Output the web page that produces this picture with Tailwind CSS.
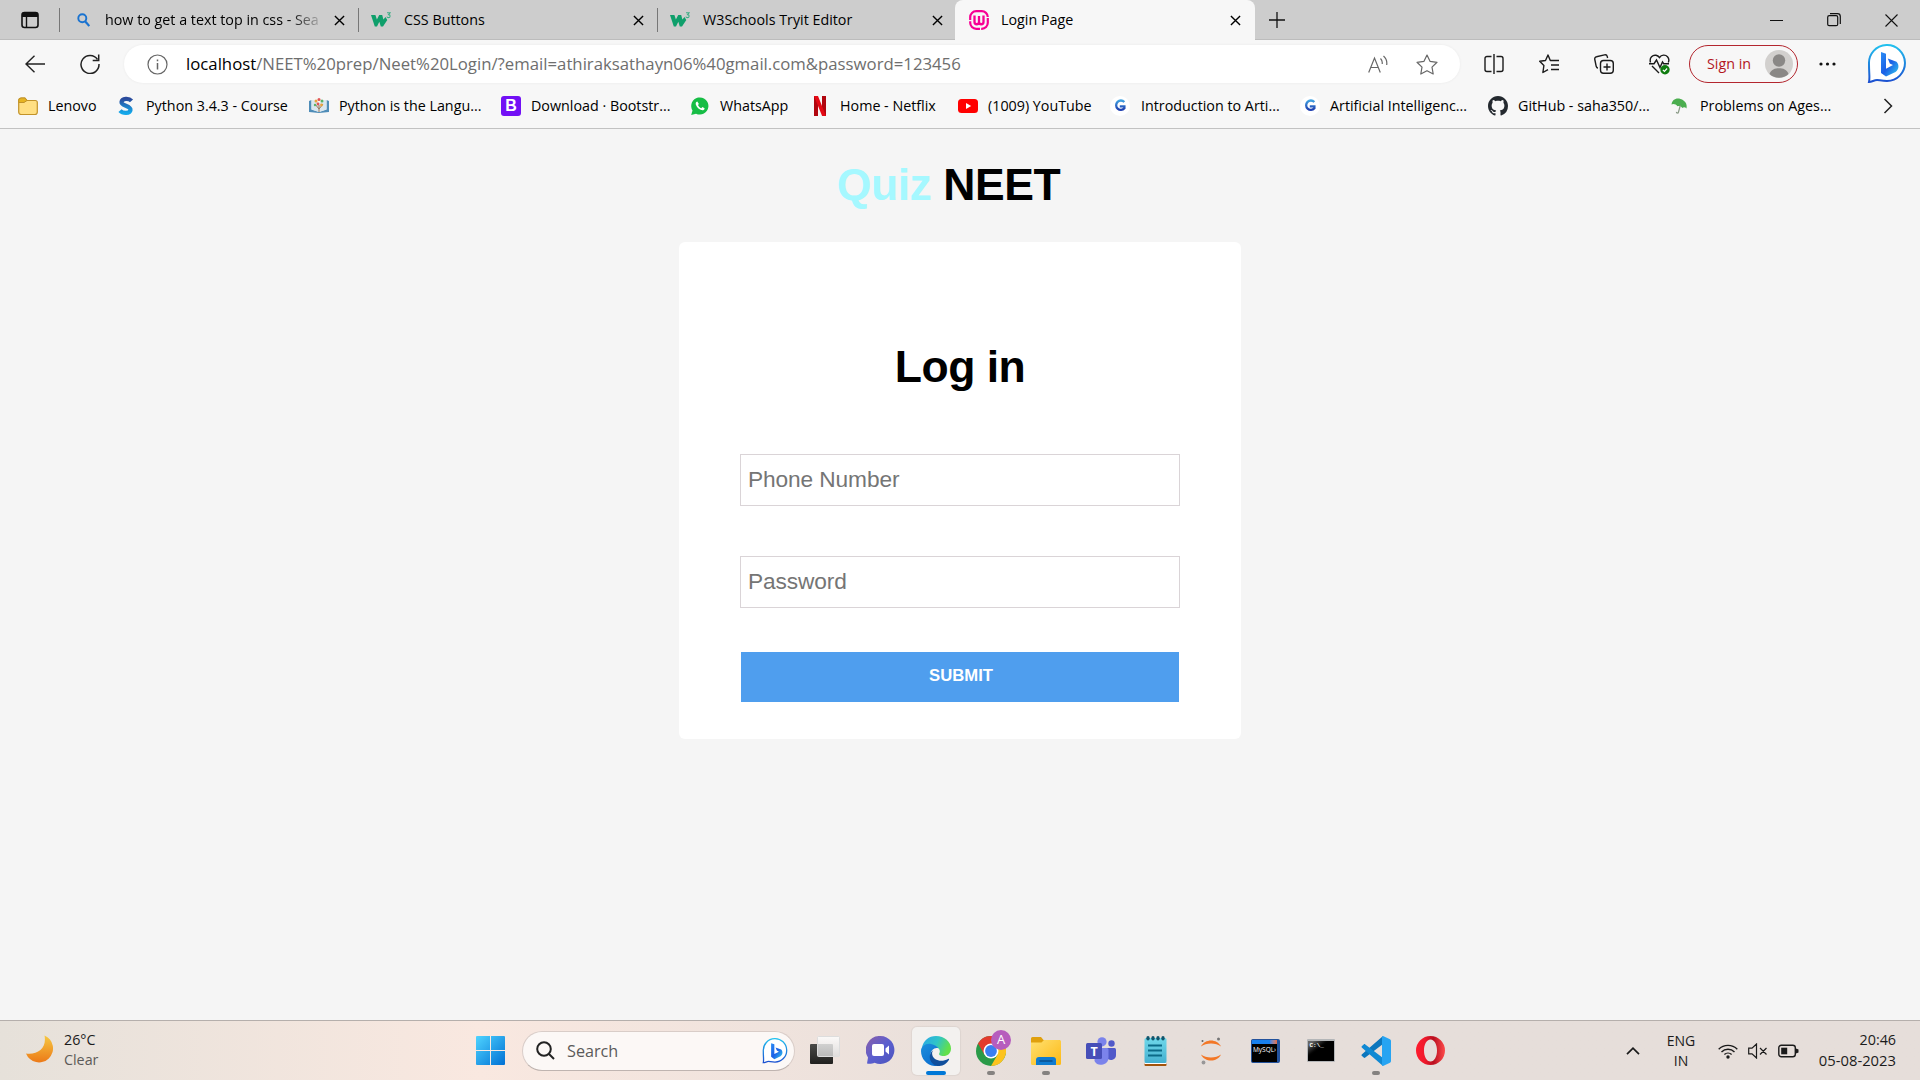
<!DOCTYPE html>
<html lang="en">
<head>
<meta charset="utf-8">
<title>Login Page</title>
<script src="https://cdn.jsdelivr.net/npm/@tailwindcss/browser@4"></script>
</head>
<body class="flex h-[1080px] w-[1920px] flex-col overflow-hidden bg-[#f5f5f5] font-['Open_Sans',sans-serif] text-[14.3px] text-black">

<svg class="absolute h-0 w-0">
  <defs>
    <linearGradient id="bingLine" x1="0" y1="0" x2="0" y2="1"><stop offset="0" stop-color="#22c1ee"/><stop offset="1" stop-color="#1b4fd0"/></linearGradient>
    <linearGradient id="bingB" x1="0" y1="0" x2="1" y2="1"><stop offset="0" stop-color="#2a8df5"/><stop offset=".5" stop-color="#1b5fe6"/><stop offset="1" stop-color="#35d0ee"/></linearGradient>
    <linearGradient id="win" x1="0" y1="0" x2="1" y2="1"><stop offset="0" stop-color="#4fd4ff"/><stop offset="1" stop-color="#0070d4"/></linearGradient>
    <linearGradient id="moon" x1="0" y1="0" x2="0" y2="1"><stop offset="0" stop-color="#f6c842"/><stop offset="1" stop-color="#ec7a18"/></linearGradient>
    <linearGradient id="chat" x1="0" y1="0" x2="1" y2="1"><stop offset="0" stop-color="#8c5fa8"/><stop offset=".5" stop-color="#5b5fcf"/><stop offset="1" stop-color="#4b53bc"/></linearGradient>
    <linearGradient id="edgeTop" x1="0" y1="0" x2="1" y2=".35"><stop offset="0" stop-color="#2aa5e8"/><stop offset=".55" stop-color="#2fc4c8"/><stop offset="1" stop-color="#62e04a"/></linearGradient>
    <linearGradient id="edgeLow" x1="0" y1="0" x2=".6" y2="1"><stop offset="0" stop-color="#1d8fdc"/><stop offset="1" stop-color="#0a6fd0"/></linearGradient>
    <linearGradient id="fold" x1="0" y1="0" x2="1" y2="1"><stop offset="0" stop-color="#ffe070"/><stop offset="1" stop-color="#fdb914"/></linearGradient>
    <linearGradient id="opera" x1="0" y1="0" x2="1" y2="0"><stop offset="0" stop-color="#ff1b2d"/><stop offset=".3" stop-color="#f01a2c"/><stop offset=".6" stop-color="#b80f20"/><stop offset="1" stop-color="#ff4b4b"/></linearGradient>
    <linearGradient id="tvw" x1="0" y1="0" x2="0" y2="1"><stop offset="0" stop-color="#4a4a48"/><stop offset="1" stop-color="#20201e"/></linearGradient>
    <linearGradient id="tvf" x1="0" y1="0" x2="0" y2="1"><stop offset="0" stop-color="#ffffff"/><stop offset="1" stop-color="#dcdcdc"/></linearGradient>
    <linearGradient id="sgrad" x1="0" y1="0" x2="0" y2="1"><stop offset="0" stop-color="#2b4b9c"/><stop offset="1" stop-color="#14a8ea"/></linearGradient>
    <linearGradient id="gg" x1="0" y1="0" x2="0" y2="1"><stop offset="0" stop-color="#3fa0e0"/><stop offset="1" stop-color="#1f3fb0"/></linearGradient>
    <linearGradient id="note" x1="0" y1="0" x2="0" y2="1"><stop offset="0" stop-color="#6fd8ea"/><stop offset="1" stop-color="#45b0d0"/></linearGradient>
    <symbol id="x" viewBox="0 0 12 12"><path d="M1 1l10 10M11 1L1 11" stroke="currentColor" stroke-width="1.5" fill="none"/></symbol>
    <symbol id="w3" viewBox="0 0 20 16"><path d="M0 3h4.400l1.500 4.400L8.200 3h3l1.200 4.400L14.500 5l1.800 3-4.300 6.500H9.800L8.300 9.800 6 14.500H3.800z" fill="#0f9f6b"/><path d="M16 .8h3l-1.400 1.800c2.200.2 1.800 3-.1 3-.9 0-1.500-.4-1.700-1" fill="none" stroke="#3fae86" stroke-width="1.100"/></symbol>
    <symbol id="bing" viewBox="0 0 40 40"><path d="M2 38C3 34 2 30 2 20A18 18 0 1 1 20 37c-5 0-8-1-10-1-3 0-5 2-8 2z" fill="#fff" stroke="url(#bingLine)" stroke-width="2"/><path d="M14 8l5 1.800v15l7-3.800-3.200-1.600L20.800 14.500l8.700 3.200c3 3 2.500 8-1 10.200L19 32.500l-5-3.500z" fill="url(#bingB)"/></symbol>
    <symbol id="geek" viewBox="0 0 20 20"><circle cx="10" cy="10" r="10" fill="#fff"/><path d="M14.300 6A4.700 4.700 0 1 0 14.400 12.300V10.400H9.800" fill="none" stroke="url(#gg)" stroke-width="2.300"/></symbol>
  </defs>
</svg>

<!-- Tab strip -->
<header class="flex h-10 shrink-0 items-center bg-[#cdcdcd] shadow-[inset_0_-1px_0_#bcbcbc]">
  <div class="flex w-[59px] justify-center">
    <svg class="h-[18px] w-[18px]" viewBox="0 0 18 18"><rect x="1" y="1.500" width="16" height="15" rx="2.500" fill="none" stroke="#111" stroke-width="1.600"/><path d="M1 3.500a2.500 2.500 0 0 1 2.500-2.500h11A2.500 2.500 0 0 1 17 3.500V6H1z" fill="#111"/><path d="M5.500 5v11" stroke="#111" stroke-width="1.400"/></svg>
  </div>
  <div class="flex h-6 w-[299px] items-center border-l border-[#777] pl-[17px]">
    <svg class="h-[14px] w-[13px]" viewBox="0 0 13 14"><circle cx="5.300" cy="5.300" r="4" fill="none" stroke="#1a73d0" stroke-width="1.900"/><path d="M8.300 8.500l4 4.500" stroke="#1a73d0" stroke-width="2.200"/></svg>
    <span class="ml-[15px] w-[217px] overflow-hidden whitespace-nowrap bg-gradient-to-r from-black from-85% to-black/10 bg-clip-text text-transparent">how to get a text top in css - Sea</span>
    <svg class="ml-3 h-[11px] w-[11px]"><use href="#x"/></svg>
  </div>
  <div class="flex h-6 w-[299px] items-center border-l border-[#777] pl-3">
    <svg class="h-4 w-5"><use href="#w3"/></svg>
    <span class="ml-[13px] w-[229px]">CSS Buttons</span>
    <svg class="h-[11px] w-[11px]"><use href="#x"/></svg>
  </div>
  <div class="flex h-6 w-[298px] items-center border-l border-[#777] pl-3">
    <svg class="h-4 w-5"><use href="#w3"/></svg>
    <span class="ml-[13px] w-[229px]">W3Schools Tryit Editor</span>
    <svg class="h-[11px] w-[11px]"><use href="#x"/></svg>
  </div>
  <div class="flex h-10 w-[300px] items-center rounded-t-lg bg-[#f7f7f7] pl-[14px]">
    <svg class="h-5 w-5" viewBox="0 0 20 20"><rect x="1.200" y="1.200" width="17.600" height="17.600" rx="6" fill="none" stroke="#f70094" stroke-width="2.200" stroke-dasharray="14.500 1.200"/><path d="M5.500 5.500v6.500a2.200 2.200 0 0 0 4.500 0V6v6a2.200 2.200 0 0 0 4.500 0V5.500" fill="none" stroke="#f70094" stroke-width="2.300"/></svg>
    <span class="ml-3 w-[229px]">Login Page</span>
    <svg class="h-[11px] w-[11px]"><use href="#x"/></svg>
  </div>
  <svg class="ml-[14px] h-4 w-4" viewBox="0 0 16 16"><path d="M8 0v16M0 8h16" stroke="#111" stroke-width="1.300"/></svg>
  <svg class="ml-auto h-[14px] w-[13px]" viewBox="0 0 13 14"><path d="M0 7.500h13" stroke="#111"/></svg>
  <svg class="ml-[44px] h-[14px] w-[14px]" viewBox="0 0 14 14"><rect x=".7" y="2.700" width="10" height="10" rx="1.500" fill="none" stroke="#111" stroke-width="1.200"/><path d="M3 .7h7.500a2.800 2.800 0 0 1 2.800 2.800V11" fill="none" stroke="#111" stroke-width="1.200"/></svg>
  <svg class="mr-[22px] ml-[44px] h-[13px] w-[13px]" viewBox="0 0 13 13"><path d="M.5.5l12 12M12.500.5l-12 12" stroke="#111" stroke-width="1.100"/></svg>
</header>

<!-- Toolbar -->
<div class="flex h-[48px] shrink-0 items-center bg-[#f7f7f7]">
  <svg class="ml-[25px] h-[18px] w-5" viewBox="0 0 20 18" fill="none" stroke="#222" stroke-width="1.400"><path d="M9.500.7L1 9l8.500 8.300M1 9h19"/></svg>
  <svg class="ml-[35px] h-5 w-5" viewBox="0 0 20 20" fill="none" stroke="#222" stroke-width="1.500"><path d="M17.500 5.500A9 9 0 1 0 19 10"/><path d="M18.700.5v6h-6"/></svg>
  <div class="ml-6 flex h-[38px] w-[1336px] items-center rounded-full bg-white pl-[23px] shadow-[0_0_3px_rgba(0,0,0,0.06)]">
    <svg class="h-[21px] w-[21px]" viewBox="0 0 21 21" fill="none" stroke="#666"><circle cx="10.500" cy="10.500" r="9.500" stroke-width="1.200"/><path d="M10.500 9v6.500M10.500 5.500v1.800" stroke-width="1.500"/></svg>
    <span class="ml-[18px] w-[1182px] text-[16.75px] whitespace-nowrap text-[#6e6e6e]"><span class="text-black">localhost</span>/NEET%20prep/Neet%20Login/?email=athiraksathayn06%40gmail.com&amp;password=123456</span>
    <svg class="h-[19px] w-5" viewBox="0 0 20 19" fill="none" stroke="#666" stroke-width="1.200"><path d="M.7 17.500L6.500 3l5.800 14.500M2.700 12.500h7.600M12.500 3.500c1.500 1.500 2 3.500 1.700 5.500M15.500 1c2.500 2.200 3.700 5.500 3.200 9"/></svg>
    <svg class="ml-[28px] h-[21px] w-[22px]" viewBox="0 0 22 21" fill="none" stroke="#666" stroke-width="1.200" stroke-linejoin="round"><path d="M11 1l3 6.300 7 1-5 4.800 1.200 6.900L11 16.700 4.800 20 6 13.100 1 8.300l7-1z"/></svg>
  </div>
  <svg class="ml-6 h-5 w-5" viewBox="0 0 20 20" fill="none" stroke="#1b1b1b" stroke-width="1.400"><path d="M7.500 2.500H3a2 2 0 0 0-2 2v11a2 2 0 0 0 2 2h4.500M12.500 2.500H17a2 2 0 0 1 2 2v11a2 2 0 0 1-2 2h-4.500M10 0v20"/></svg>
  <svg class="ml-[35px] h-5 w-5" viewBox="0 0 20 20" fill="none" stroke="#1b1b1b" stroke-width="1.400" stroke-linejoin="round"><path d="M13 6.500H11.300L9 1 6.500 6.500l-5.800.8 4.200 4.200-1 7 5.100-2.900M13 6.500h7M12 11h8M12 15.500h8"/></svg>
  <svg class="ml-[35px] h-5 w-5" viewBox="0 0 20 20" fill="none" stroke="#1b1b1b" stroke-width="1.400"><rect x="6.500" y="6.500" width="12.800" height="12.800" rx="3"/><path d="M13 9.500v7M9.500 13h7M4 14c-1 0-1.500-.7-1.800-1.700L.8 5.500C.5 4 1.300 3 2.500 2.800L10.500.9c1.300-.3 2.500.5 2.800 1.800l.3 1.300"/></svg>
  <svg class="ml-[35px] h-[21px] w-[21px]" viewBox="0 0 21 21" fill="none" stroke="#1b1b1b" stroke-width="1.400"><path d="M1.500 8.500C0 3 4 .8 7 1.300c1.700.3 2.700 1.200 3.500 2.200 2-3 6-3 8-.8 1.500 1.700 1.600 4 .8 5.800M3 12l7 7M0 9.700h5L7.500 6l3.500 7.500 2.500-5.500 1.200 1.700H20"/><circle cx="16" cy="15.800" r="4.700" fill="#107c10" stroke="none"/><path d="M13.900 15.900l1.500 1.500 2.700-2.900" stroke="#fff" stroke-width="1.200"/></svg>
  <div class="ml-[19px] flex h-[38px] w-[109px] items-center justify-between rounded-full border-[1.500px] border-[#b3262e] pr-1 pl-[17px] text-[#b3161e]">
    <span class="whitespace-nowrap">Sign in</span>
    <svg class="h-7 w-7" viewBox="0 0 28 28"><circle cx="14" cy="14" r="14" fill="#d2d0ce"/><circle cx="14" cy="10.500" r="6.200" fill="#8a8886"/><path d="M4.500 24C6 19.500 10 18.300 14 18.300S22 19.500 23.500 24A14 14 0 0 1 4.500 24z" fill="#8a8886"/></svg>
  </div>
  <svg class="ml-[21px] h-1 w-[17px]" viewBox="0 0 17 4" fill="#111"><circle cx="2" cy="2" r="1.600"/><circle cx="8.500" cy="2" r="1.600"/><circle cx="15" cy="2" r="1.600"/></svg>
  <svg class="ml-[31px] h-10 w-10"><use href="#bing"/></svg>
</div>

<!-- Favourites bar -->
<nav class="flex h-[41px] shrink-0 items-center border-b border-[#c2c2c2] bg-[#f7f7f7] pb-1 pl-[18px] whitespace-nowrap">
  <div class="flex w-[98px] shrink-0 items-center gap-[10px]">
    <svg class="h-5 w-5" viewBox="0 0 20 20"><path d="M.7 4.500A2.500 2.500 0 0 1 3.200 2H7l2 2.500h8.300a2 2 0 0 1 2 2V16a2.500 2.500 0 0 1-2.500 2.500H3.200A2.500 2.500 0 0 1 .7 16z" fill="#ffdf83" stroke="#c2932a" stroke-width="1.200"/><path d="M.7 6.500H6l3-2L7 2H3.200A2.500 2.500 0 0 0 .7 4.500z" fill="#e6b422" stroke="#c2932a"/></svg>Lenovo</div>
  <div class="flex w-[193px] shrink-0 items-center gap-[10px]">
    <svg class="h-5 w-5" viewBox="0 0 20 20"><path d="M15.500 4.800C13 2 6 2 5.500 6s9.500 3.500 9 8c-.5 4-8 3.500-10.500.7" fill="none" stroke="url(#sgrad)" stroke-width="4.200"/></svg>Python 3.4.3 - Course</div>
  <div class="flex w-[192px] shrink-0 items-center gap-[10px]">
    <svg class="h-5 w-5" viewBox="0 0 20 20"><path d="M0 5l2.500-1v9.500L10 16l7.500-2.500V4L20 5v11L10 17 0 16z" fill="#4f8db8"/><path d="M2.500 4Q7 4 10 7.500 13 4 17.500 4v9.500L10 16l-7.500-2.500z" fill="#d9e6ee"/><path d="M10 16V9M10 13L6 8M10 13l4-5" stroke="#9a7a5a" fill="none"/><circle cx="7" cy="5" r="1.500" fill="#e8a33a"/><circle cx="10" cy="3.500" r="1.500" fill="#e25555"/><circle cx="13" cy="5" r="1.500" fill="#58b368"/><circle cx="9" cy="8" r="1.400" fill="#e25555"/><circle cx="12.500" cy="9" r="1.400" fill="#e8a33a"/><circle cx="6" cy="9" r="1.200" fill="#58b368"/></svg>Python is the Langu...</div>
  <div class="flex w-[189px] shrink-0 items-center gap-[10px]">
    <span class="flex h-5 w-5 items-center justify-center rounded-[3px] bg-[#7210f5] font-['Liberation_Sans',sans-serif] text-[16px] leading-none font-bold text-white">B</span>Download · Bootstr...</div>
  <div class="flex w-[120px] shrink-0 items-center gap-[10px]">
    <svg class="h-5 w-5" viewBox="0 0 20 20"><path d="M1.200 19l1.300-4.500A8.600 8.600 0 1 1 6 17.700z" fill="#16bd45"/><path d="M7.300 5.500c-1.500.3-2 2-1.300 3.600 1 2.400 3 4.300 5.300 5 1.700.5 3.200-.2 3.300-1.900l-2.200-1.100-1.100 1.200C9.800 11.800 8.600 10.500 8 9.100l.9-1.100z" fill="#fff"/></svg>WhatsApp</div>
  <div class="flex w-[148px] shrink-0 items-center gap-[10px]">
    <svg class="h-5 w-5" viewBox="0 0 20 20"><path d="M4 0h4v20l-4 .3zM12 0h4v20l-4-.3z" fill="#b1060f"/><path d="M4 0h4l8 20-4-.3z" fill="#e50914"/></svg>Home - Netflix</div>
  <div class="flex w-[152px] shrink-0 items-center gap-[10px]">
    <svg class="h-5 w-5" viewBox="0 0 20 20"><rect y="3" width="20" height="14" rx="3.500" fill="#f00"/><path d="M8 7l5.200 3L8 13z" fill="#fff"/></svg>(1009) YouTube</div>
  <div class="flex w-[190px] shrink-0 items-center gap-[11px]">
    <svg class="h-5 w-5"><use href="#geek"/></svg>Introduction to Arti...</div>
  <div class="flex w-[188px] shrink-0 items-center gap-[10px]">
    <svg class="h-5 w-5"><use href="#geek"/></svg>Artificial Intelligenc...</div>
  <div class="flex w-[182px] shrink-0 items-center gap-[10px]">
    <svg class="h-5 w-5" viewBox="0 0 16 16"><path fill="#24292f" d="M8 0C3.580 0 0 3.580 0 8c0 3.540 2.290 6.530 5.470 7.590.4.070.55-.17.55-.38 0-.19-.01-.82-.01-1.490-2.010.37-2.530-.49-2.690-.94-.09-.23-.48-.94-.82-1.130-.28-.15-.68-.52-.01-.53.63-.01 1.080.58 1.230.82.72 1.210 1.870.87 2.330.66.07-.52.28-.87.51-1.070-1.780-.2-3.640-.89-3.640-3.950 0-.87.31-1.590.82-2.150-.08-.2-.36-1.020.08-2.120 0 0 .67-.21 2.200.82.64-.18 1.320-.27 2-.27s1.360.09 2 .27c1.530-1.040 2.200-.82 2.200-.82.44 1.100.16 1.920.08 2.120.51.56.82 1.270.82 2.150 0 3.070-1.870 3.750-3.650 3.950.29.25.54.73.54 1.480 0 1.070-.01 1.930-.01 2.200 0 .21.15.46.55.38A8.010 8.010 0 0 0 16 8c0-4.420-3.580-8-8-8z"/></svg>GitHub - saha350/...</div>
  <div class="flex w-[213px] shrink-0 items-center gap-[10px]">
    <svg class="h-5 w-5" viewBox="0 0 20 20"><path d="M1.500 8.500C2 4 6 1.500 10.500 3c4.500 1.300 7 5 6 9.500-1.200-1.300-2.800-1.500-4.200-.5-1-1.800-2.800-2.600-4.800-1.800C6 8.300 3.500 7.300 1.500 8.500z" fill="#4bae4f"/><path d="M10.300 9.500L8.500 16c-.4 1.600-2.300 1.200-2-.2" fill="none" stroke="#8a9a86" stroke-width="1.200"/></svg>Problems on Ages...</div>
  <svg class="h-4 w-[10px]" viewBox="0 0 10 16"><path d="M1.500 1l7 7-7 7" fill="none" stroke="#222" stroke-width="1.500"/></svg>
</nav>

<!-- Page -->
<main class="flex flex-1 flex-col items-center bg-[#f5f5f5] font-['Liberation_Sans',Arial,sans-serif]">
  <h1 class="mt-[30px] mr-[23px] text-[44.500px] leading-[52px] font-bold tracking-[-0.45px] text-black"><span class="text-[#a5f8ff]">Quiz</span> NEET</h1>
  <form class="mt-[31px] flex h-[497px] w-[562px] flex-col items-center rounded-md bg-white">
    <h2 class="mt-[99px] text-[44.500px] leading-[52px] font-bold tracking-[-0.5px]">Log in</h2>
    <input type="text" placeholder="Phone Number" class="mt-[61px] h-[52px] w-[440px] border border-[#dad4d7] px-[7px] pb-px text-[22.700px] tracking-[-0.1px] placeholder:text-[#757575]">
    <input type="password" placeholder="Password" class="mt-[50px] h-[52px] w-[440px] border border-[#dad4d7] px-[7px] pb-px text-[22.700px] tracking-[-0.1px] placeholder:text-[#757575]">
    <button type="button" class="mt-11 h-[50px] w-[438px] bg-[#4f9eee] pb-[2px] pl-[2px] text-[16.700px] font-bold text-white">SUBMIT</button>
  </form>
</main>

<!-- Taskbar -->
<footer class="flex h-[60px] shrink-0 items-center border-t border-[#b5afac] bg-gradient-to-r from-[#e6e1da] via-[#f9e8e0] via-25% to-[#e6deda] to-55% text-[#1b1b1b]">
  <div class="flex w-[448px] items-center pl-[26px]">
    <svg class="-mt-1 h-7 w-7" viewBox="0 0 28 28"><path d="M18.500.5A14 14 0 1 1 0 18.500C12 20 21 13 18.500.5z" fill="url(#moon)"/></svg>
    <div class="-mt-[2px] ml-[10px] leading-5"><div>26°C</div><div class="text-[#5c5a58]">Clear</div></div>
  </div>
  <div class="flex w-[74px] justify-center pl-[10px]">
    <svg class="h-[29px] w-[29px]" viewBox="0 0 29 29"><path d="M1 0h13v14H0V1a1 1 0 0 1 1-1zM15 0h13a1 1 0 0 1 1 1v13H15zM0 15h14v14H1a1 1 0 0 1-1-1zM15 15h14v13a1 1 0 0 1-1 1H15z" fill="url(#win)"/></svg>
  </div>
  <div class="flex h-10 w-[273px] items-center rounded-full border border-[#d9cdc8] border-b-[#bfb4b0] bg-[#fcf8f6] pr-[6px] pl-[13px]">
    <svg class="h-[19px] w-[19px]" viewBox="0 0 19 19" fill="none" stroke="#222" stroke-width="2"><circle cx="8" cy="8" r="6.800"/><path d="M13 13l5 5"/></svg>
    <span class="ml-[12px] flex-1 pt-px text-[16.200px] text-[#5b5a59]">Search</span>
    <svg class="h-[26px] w-[26px]"><use href="#bing"/></svg>
  </div>
  <div class="ml-[2px] flex h-full items-center">
    <div class="flex w-[55px] justify-center">
      <svg class="h-[29px] w-[30px]" viewBox="0 0 30 29"><rect y="8" width="23" height="20" rx="1" fill="url(#tvw)"/><rect x="7.500" y=".5" width="22" height="20" rx="1" fill="url(#tvf)" fill-opacity=".8" stroke="#ddd"/></svg>
    </div>
    <div class="flex w-[56px] justify-center">
      <svg class="h-[29px] w-[29px]" viewBox="0 0 29 29"><path d="M14.500 0a14 14 0 1 1-6 26.700c-2 1-5 1.300-7.500.8L2 21.500A14 14 0 0 1 14.500 0z" fill="url(#chat)"/><rect x="6" y="8" width="12" height="12" rx="2" fill="#fff"/><path d="M19.500 12.500L23 9.500v9l-3.500-3z" fill="#fff"/></svg>
    </div>
    <div class="relative flex w-[55px] justify-center">
      <div class="flex h-12 w-12 items-center justify-center rounded-[5px] bg-[#f3f1ef] shadow-[0_0_1px_1px_rgba(0,0,0,0.05)]">
        <svg class="h-[30px] w-[30px]" viewBox="0 0 30 30"><path d="M1 12C2 4.500 8 0 15 0c8.500 0 15 6 15 12.500 0 5-3.500 7.500-7.500 7.500-3.300 0-5-1.300-4.300-2.500 1-1.800.8-3.500-.5-5C14 8.500 5 7.500 1 12z" fill="url(#edgeTop)"/><path d="M0 15C0 10 5 7 10 8c3.500.6 6.500 2.500 7.700 4.500C14 10.800 9.500 14 9.500 19c0 5 3.500 9 7.500 11C7.500 31 0 24 0 15z" fill="url(#edgeLow)"/><path d="M12.500 14c-2.500 2.500-1.500 7 1.500 9 4 2.500 9 2.200 13 0 .8-.5 1.400.2.900.9C25.500 28 21 30.500 16 30 10 28 8 23 9 19c.5-2.300 1.800-4 3.500-5z" fill="#104f9c"/></svg>
      </div>
      <span class="absolute bottom-0 h-1 w-5 rounded-full bg-[#0078d7]"></span>
    </div>
    <div class="relative flex h-12 w-[55px] items-center justify-center">
      <svg class="h-[30px] w-[30px]" viewBox="0 0 30 30"><circle cx="15" cy="15" r="15" fill="#2a9a48"/><path d="M2 7.500A15 15 0 0 1 28 7.500H15L8.500 18.800z" fill="#e33b2e"/><path d="M28 7.500A15 15 0 0 1 15 30l6.500-11.300L21.500 11 15 7.500z" fill="#fcc31e"/><circle cx="15" cy="15" r="7.500" fill="#fff"/><circle cx="15" cy="15" r="5.900" fill="#3a7ff0"/></svg>
      <span class="absolute top-[3px] right-[7px] flex h-5 w-5 items-center justify-center rounded-full bg-[#b65dbd] text-[13px] leading-none text-white">A</span>
      <span class="absolute bottom-0 h-1 w-2 rounded-full bg-[#858280]"></span>
    </div>
    <div class="relative flex h-12 w-[55px] items-center justify-center">
      <svg class="h-[28px] w-[30px]" viewBox="0 0 30 28"><path d="M0 1.500A1.500 1.500 0 0 1 1.500 0H10l2.500 3H29v6H0z" fill="#e0a00d"/><path d="M0 5.500h10.500L13 3h15.500A1.500 1.500 0 0 1 30 4.500V26.500a1.500 1.500 0 0 1-1.500 1.500h-27A1.500 1.500 0 0 1 0 26.500z" fill="url(#fold)"/><path d="M5 28v-5a3 3 0 0 1 3-3h14a3 3 0 0 1 3 3v5z" fill="#0f7bd0"/><path d="M8.500 24h13" stroke="#0a4f8f" stroke-width="1.500"/></svg>
      <span class="absolute bottom-0 h-1 w-2 rounded-full bg-[#858280]"></span>
    </div>
    <div class="flex w-[55px] justify-center">
      <svg class="h-[28px] w-[30px]" viewBox="0 0 30 28"><circle cx="25.500" cy="6.500" r="3.200" fill="#5059c9"/><path d="M20 11h8.500A1.500 1.500 0 0 1 30 12.500V18a5 5 0 0 1-9 3z" fill="#5059c9"/><circle cx="16" cy="4.800" r="4.600" fill="#7b83eb"/><path d="M9 11h12a1.500 1.500 0 0 1 1.500 1.500V20a7.500 7.500 0 0 1-14 4z" fill="#7b83eb"/><rect y="6" width="16" height="16" rx="1.500" fill="#464eb8"/><text x="8" y="18.500" font-family="Open Sans" font-size="12.500" font-weight="700" fill="#fff" text-anchor="middle">T</text></svg>
    </div>
    <div class="flex w-[55px] justify-center">
      <svg class="h-[30px] w-[23px]" viewBox="0 0 23 30"><rect x=".5" y="26" width="22" height="4" rx="1" fill="#a3540c"/><rect x=".5" y="25" width="22" height="3" fill="#fff"/><rect x=".5" y="2" width="22" height="25" rx="1.500" fill="url(#note)"/><path d="M4 9.500h14M4 14.500h14M4 19.500h14" stroke="#0b6a88" stroke-width="1.800"/><g fill="#11556c"><ellipse cx="4" cy="2.200" rx="1.700" ry="2.200"/><ellipse cx="9" cy="2.200" rx="1.700" ry="2.200"/><ellipse cx="14" cy="2.200" rx="1.700" ry="2.200"/><ellipse cx="19" cy="2.200" rx="1.700" ry="2.200"/></g></svg>
    </div>
    <div class="flex w-[55px] justify-center">
      <svg class="h-[28px] w-[22px]" viewBox="0 0 22 28"><path d="M1 9.500C5 1.500 17 1.500 21 9.500 16 5.500 6 5.500 1 9.500zM1 17.500c4 8 16 8 20 0-5 4-15 4-20 0z" fill="#f37726"/><circle cx="18.500" cy="2" r="1.500" fill="#767677"/><circle cx="2.500" cy="4" r="1" fill="#616262"/><circle cx="3.500" cy="25.500" r="1.900" fill="#989798"/></svg>
    </div>
    <div class="flex w-[55px] justify-center">
      <div class="h-6 w-[29px] rounded-[2px] border-[1.500px] border-r-[3px] border-[#23529c] bg-black">
        <div class="h-[4px] bg-gradient-to-r from-[#1780ef] from-70% to-[#e66a3c]"></div>
        <div class="mt-px pl-px font-['Open_Sans',sans-serif] text-[6.500px] leading-[10px] whitespace-nowrap text-white">MySQL›</div>
      </div>
    </div>
    <div class="flex w-[55px] justify-center">
      <div class="h-[23px] w-7 rounded-[1px] border-[1.500px] border-t-[2.500px] border-[#b4b6b8] bg-gradient-to-br from-[#666] from-10% via-black via-45% to-black">
        <div class="pt-px pl-[2px] font-['Liberation_Mono',monospace] text-[6px] leading-[7px] font-bold text-white">C:\_</div>
      </div>
    </div>
    <div class="relative flex h-12 w-[55px] items-center justify-center">
      <svg class="h-[30px] w-[30px]" viewBox="0 0 30 30"><path d="M22 0L1 18.300a1.200 1.200 0 0 0 0 1.800l1.700 1.500c.5.4 1.100.4 1.600 0L22 8z" fill="#0b76bd"/><path d="M22 30L1 11.700a1.200 1.200 0 0 1 0-1.800l1.700-1.500c.5-.4 1.100-.4 1.600 0L22 22z" fill="#1089d3"/><path d="M22 0l7 3.300c.6.300 1 .9 1 1.600v20.200c0 .7-.4 1.300-1 1.600L22 30c-.7-.3-1-1-1-1.800V1.800C21 1 21.300.300 22 0z" fill="#27a4f2"/></svg>
      <span class="absolute bottom-0 h-1 w-2 rounded-full bg-[#858280]"></span>
    </div>
    <div class="flex w-[55px] justify-center">
      <svg class="h-[29px] w-[29px]" viewBox="0 0 29 29"><path fill-rule="evenodd" d="M14.500 0a14.500 14.500 0 1 1 0 29 14.500 14.500 0 0 1 0-29zm0 3.500C10.500 3.500 8 8.500 8 14.500s2.500 11 6.500 11 6.500-5 6.500-11-2.500-11-6.500-11z" fill="url(#opera)"/></svg>
    </div>
  </div>
  <div class="mr-6 ml-auto flex items-center">
    <svg class="h-2 w-[14px]" viewBox="0 0 14 8"><path d="M1 7.200l6-6 6 6" fill="none" stroke="#1b1b1b" stroke-width="1.700"/></svg>
    <div class="ml-[25px] w-[32px] text-center text-[14px] leading-5"><div>ENG</div><div>IN</div></div>
    <svg class="ml-[21px] h-4 w-5" viewBox="0 0 20 16" fill="none" stroke="#1b1b1b" stroke-width="1.400"><path d="M.7 6.300a13 13 0 0 1 18.600 0M3.500 9a9.200 9.200 0 0 1 13 0M6.400 11.600a5.200 5.200 0 0 1 7.200 0"/><circle cx="10" cy="14" r="1.700" fill="#1b1b1b" stroke="none"/></svg>
    <svg class="ml-[10px] h-4 w-5" viewBox="0 0 20 16" fill="none" stroke="#1b1b1b" stroke-width="1.200"><path d="M.7 5.200H4L8.500 1v14L4 10.800H.7zM12 5l6.500 6.500M18.500 5L12 11.500"/></svg>
    <svg class="ml-[10px] h-[14px] w-[21px]" viewBox="0 0 21 14"><rect x=".8" y="1.300" width="16.500" height="11.400" rx="2.500" fill="none" stroke="#1b1b1b" stroke-width="1.400"/><rect x="3.200" y="3.700" width="6" height="6.600" fill="#1b1b1b"/><path d="M18 4.500l2.500 1v3L18 9.500z" fill="#1b1b1b"/></svg>
    <div class="-mt-[2px] ml-[19px] w-[78px] text-right leading-5 whitespace-nowrap"><div>20:46</div><div class="text-[14.800px]">05-08-2023</div></div>
  </div>
</footer>
</body>
</html>
